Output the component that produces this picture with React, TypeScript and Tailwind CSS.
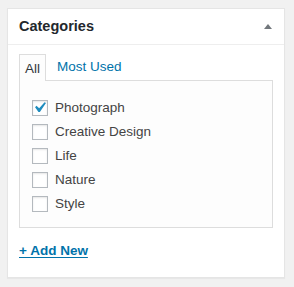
import React, { useState } from "react";

const categories = ["Photograph", "Creative Design", "Life", "Nature", "Style"];

export default function App() {
  const [checked, setChecked] = useState<string[]>(["Photograph"]);
  const [tab, setTab] = useState<"all" | "pop">("all");

  const toggle = (name: string) =>
    setChecked((prev) => (prev.includes(name) ? prev.filter((n) => n !== name) : [...prev, name]));

  return (
    <div className="min-h-[287px] w-[294px] bg-[#f1f1f1] pl-[7px] pt-[8px] font-['Liberation_Sans',Arial,sans-serif] text-[13.5px] text-[#444]">
      <div className="flex h-[270px] w-[278px] flex-col border border-[#e5e5e5] bg-white shadow-[0_1px_1px_rgba(0,0,0,0.04)]">
        {/* Header */}
        <div className="flex h-[36px] shrink-0 items-center justify-between border-b border-[#eee] pl-[11px] pr-[12px]">
          <h2 className="text-[14.5px] font-bold text-[#23282d]">Categories</h2>
          <svg width="8" height="5" viewBox="0 0 8 5">
            <path d="M4 0 L8 5 L0 5 Z" fill="#72777c" />
          </svg>
        </div>

        <div className="px-[11px] pt-[8px]">
          {/* Tabs */}
          <div className="flex items-end leading-none">
            <button
              onClick={() => setTab("all")}
              className="relative -mb-px h-[27px] border border-b-0 border-[#ddd] bg-[#fdfdfd] px-[5px] pt-[1px] text-[13.5px] text-[#32373c]"
            >
              All
            </button>
            <button onClick={() => setTab("pop")} className="ml-[11px] h-[27px] pt-[1px] text-[13.5px] text-[#0073aa]">
              Most Used
            </button>
          </div>

          {/* Panel */}
          <div className="h-[148px] w-[254px] border border-[#ddd] bg-[#fdfdfd] pl-[12px] pt-[15px]">
            {tab === "all" &&
              categories.map((name) => {
                const on = checked.includes(name);
                return (
                  <label key={name} className="flex h-[24px] cursor-pointer items-center gap-[7px] text-[#444]">
                    <span
                      onClick={() => toggle(name)}
                      className="relative h-[16px] w-[16px] shrink-0 border border-[#b4b9be] bg-white shadow-[inset_0_1px_2px_rgba(0,0,0,0.1)]"
                    >
                      {on && (
                        <svg width="21" height="21" viewBox="0 0 20 20" className="absolute left-[-4px] top-[-4px]">
                          <path d="M14.83 4.89l1.34.94-5.81 8.38H9.02L5.78 9.67l1.34-1.25 2.57 2.4z" fill="#1e8cbe" />
                        </svg>
                      )}
                    </span>
                    <span className="leading-none">{name}</span>
                  </label>
                );
              })}
          </div>

          <a href="#" className="mt-[13px] inline-block text-[13.5px] font-bold text-[#0073aa] underline underline-offset-[2px]">
            + Add New
          </a>
        </div>
      </div>
    </div>
  );
}
